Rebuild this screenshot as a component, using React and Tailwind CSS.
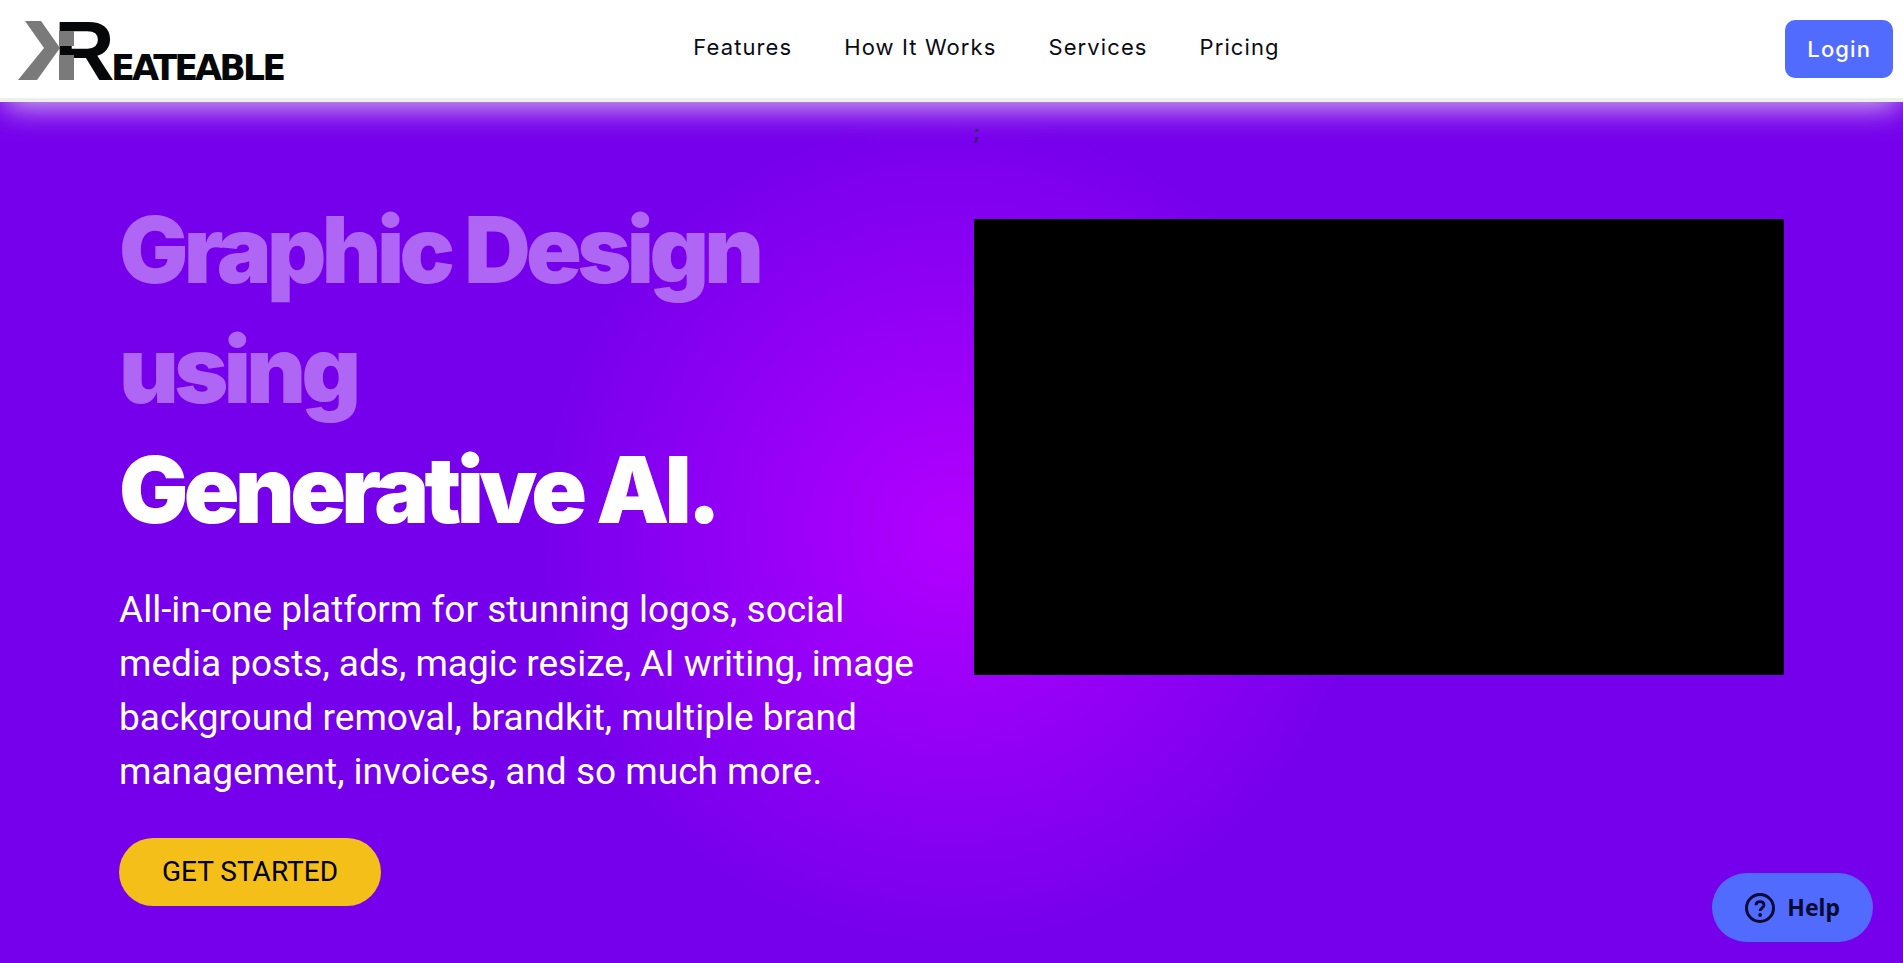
const links = [
  { href: "#features", label: "Features" },
  { href: "#how-it-works", label: "How It Works" },
  { href: "#services", label: "Services" },
  { href: "#pricing", label: "Pricing" },
];

const Logo = () => (
  <svg width="290" height="98" viewBox="0 0 290 98" role="img" aria-label="Kreateable">
    <polygon points="25,21 41,21 60,48 37,80 18,80 44,48" fill="#7a7a7a" />
    <text x="54" y="80" fontFamily="Liberation Sans, Arial, sans-serif" fontWeight="700" fontSize="84" fill="#050708">R</text>
    {/* grey stem laid over the R */}
    <rect x="59" y="31" width="15" height="15" fill="#7a7a7a" />
    <rect x="59" y="55" width="15" height="25" fill="#7a7a7a" />
    <text x="111" y="80" fontFamily="DejaVu Sans, Verdana, sans-serif" fontWeight="700" fontSize="35" letterSpacing="-3" fill="#050708">EATEABLE</text>
  </svg>
);

const Header = () => (
  <header className="relative z-10 grid grid-cols-[1fr_auto_1fr] items-center bg-white border-b-4 border-[#eeeeee] pr-2.5 shadow-[0_10px_30px_-5px_#eeeeeecc]">
    <a href="#home">
      <Logo />
    </a>
    <nav className="flex gap-13 pl-20 pb-1 text-[22px] leading-8 tracking-wider text-[#0b0b14]">
      {links.map((link) => (
        <a key={link.label} href={link.href}>{link.label}</a>
      ))}
    </nav>
    <button type="button" className="justify-self-end h-[58px] px-[22px] rounded-[10px] bg-[#526bff] text-white text-[22px] font-medium tracking-wider">
      Login
    </button>
  </header>
);

const Hero = () => (
  <main className="grow grid grid-cols-2 gap-11 px-[119px] pt-4 pb-12 bg-[radial-gradient(circle,#b200ff,#7600ec_40%)]">
    <section className="pt-[72px]">
      <h1 className="text-[92px] leading-[120px] font-black tracking-tighter text-white">
        <span className="block text-[#af66f4]">Graphic Design using</span>
        Generative AI.
      </h1>
      <p className="mt-[33px] font-[Roboto,sans-serif] text-[37px] leading-[54px] text-white">
        All-in-one platform for stunning logos, social media posts, ads, magic resize, AI writing, image background removal, brandkit, multiple brand management, invoices, and so much more.
      </p>
      <button type="button" className="mt-[39px] h-[68px] px-[43px] rounded-full bg-[#f3bf18] font-[Roboto,sans-serif] text-[28px] text-black">
        GET STARTED
      </button>
    </section>
    <section>
      <p className="text-xl leading-7 font-semibold text-[#3b1a66]">;</p>
      <video className="mt-[73px] w-full aspect-video bg-black" />
    </section>
  </main>
);

const HelpButton = () => (
  <button type="button" className="fixed z-20 right-[30px] bottom-[21px] flex items-center gap-3 h-[69px] px-[33px] rounded-full bg-[#526bff] text-[#0a0a33] font-['Noto_Sans',sans-serif] text-[23px] font-bold">
    <svg width="30" height="30" viewBox="0 0 30 30" fill="none" stroke="currentColor" strokeWidth="3" aria-hidden="true">
      <circle cx="15" cy="15" r="13.5" />
      <path d="M11 12.2C11 9.8 12.8 8.6 15 8.6s4 1.3 4 3.5c0 2.7-3.9 3-3.9 6" strokeWidth="2.8" />
      <circle cx="15.1" cy="22" r="1.9" fill="currentColor" stroke="none" />
    </svg>
    Help
  </button>
);

const App = () => {
  return (
    <div className="min-h-screen flex flex-col font-[Inter,sans-serif]">
      <Header />
      <Hero />
      <HelpButton />
    </div>
  );
};

export default App;
